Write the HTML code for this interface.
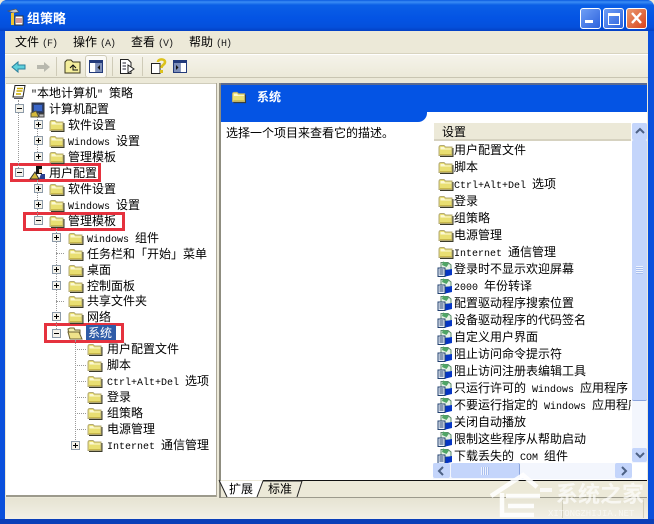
<!DOCTYPE html>
<html><head><meta charset="utf-8"><style>
html,body{margin:0;padding:0;background:#fff}
#w{position:relative;width:654px;height:524px;overflow:hidden;background:#ece9d8;font:12px/14px "WenQuanYi Zen Hei","Noto Sans CJK SC",sans-serif;color:#000}
#w div,#w span.a,#w svg{position:absolute}
.t{position:absolute;white-space:pre;height:14px;line-height:14px}
.m{font-family:"Liberation Mono",monospace;font-size:10px}
.k{font-family:"Liberation Mono",monospace;font-size:10px;letter-spacing:-1px;margin-left:3px;color:#222}
.r{position:absolute;border:3px solid #e5323e;box-sizing:border-box}
.b{position:absolute;width:9px;height:9px;box-sizing:border-box;border:1px solid #8c9aa8;background:#f4f2ea}
.b i{position:absolute;left:1px;top:3px;width:5px;height:1px;background:#000}
.b.p u{position:absolute;left:3px;top:1px;width:1px;height:5px;background:#000}
.d{position:absolute;border-left:1px dotted #999;width:0}
.h{position:absolute;border-top:1px dotted #999;height:0}
</style></head><body><div id="w">
<svg width="0" height="0"><defs>
<symbol id="f" viewBox="0 0 16 16"><path d="M1 5.5Q1 3.5 3 3.5H6L7.5 5H14V13.5H1Z" fill="#e9df72" stroke="#b3a974"/><path d="M2.5 5H6L7 6.5H13.5V7.5H2.5Z" fill="#fbf8d4"/><path d="M2 14.5H15.5M15 6V14.5" stroke="#3a3a2a" fill="none"/><path d="M2 12.5H14" stroke="#c8b84c"/></symbol>
<symbol id="g" viewBox="0 0 16 16"><path d="M4 1.5H11L14 4V9H4Z" fill="#e6f2e6" stroke="#5a8a6a"/><path d="M6 0.5L12 2.5L9.5 6L5 4Z" fill="#4fa565"/><path d="M1 7H8V15.5H1Z" fill="#e8eef6" stroke="#22406f"/><path d="M2.5 9H6.5M2.5 11H6.5M2.5 13H6.5" stroke="#22406f"/><path d="M8.5 9L15 8V14L8.5 15.5Z" fill="#0636c4"/></symbol>
</defs></svg>

<!-- frame / title -->
<div style="left:0;top:0;width:654px;height:524px;background:#0a50dc;border-radius:7px 7px 0 0"></div>
<div style="left:0;top:0;width:654px;height:31px;border-radius:7px 7px 0 0;background:linear-gradient(#0a5ae0 0,#3a8cf5 2px,#0a5fe6 5px,#0454e4 18px,#0450dc 27px,#0340c4 31px)"></div>
<div style="left:0;top:519px;width:654px;height:5px;background:#0a3fb8"></div>
<div style="left:5px;top:31px;width:643px;height:488px;background:#ece9d8"></div>
<svg style="left:7px;top:8px" width="18" height="18" viewBox="0 0 18 18"><path d="M1 3L9 1L12 4L6 5Z" fill="#c4c4c4" stroke="#555" stroke-width=".7"/><path d="M4 5H7V17H4Z" fill="#f0c530"/><path d="M8 8H16V17H8Z" fill="#fff" stroke="#333"/><path d="M10 10V15M12 10V15M14 10V15" stroke="#a33"/></svg>
<span class="t" style="left:27px;top:11px;color:#fff;font-weight:bold;font-size:13px">组策略</span>
<!-- caption btns -->
<div style="left:580px;top:8px;width:19px;height:19px;border:1px solid #fff;border-radius:3px;background:linear-gradient(135deg,#6f9ef5,#2c62dd)"></div>
<div style="left:585px;top:20px;width:8px;height:3px;background:#fff"></div>
<div style="left:603px;top:8px;width:19px;height:19px;border:1px solid #fff;border-radius:3px;background:linear-gradient(135deg,#6f9ef5,#2c62dd)"></div>
<div style="left:608px;top:13px;width:10px;height:8px;border:1px solid #fff;border-top-width:3px"></div>
<div style="left:626px;top:8px;width:19px;height:19px;border:1px solid #fff;border-radius:3px;background:linear-gradient(135deg,#ea9a70,#d8431c)"></div>
<svg style="left:629px;top:11px" width="15" height="15"><path d="M3 2L12 12M12 2L3 12" stroke="#fff" stroke-width="2.4"/></svg>

<!-- menu -->
<div style="left:5px;top:53px;width:643px;height:1px;background:#d8d4c0"></div>
<div style="left:5px;top:54px;width:643px;height:1px;background:#fff"></div>
<span class="t" style="left:15px;top:35px">文件<span class="k">(F)</span></span>
<span class="t" style="left:73px;top:35px">操作<span class="k">(A)</span></span>
<span class="t" style="left:131px;top:35px">查看<span class="k">(V)</span></span>
<span class="t" style="left:189px;top:35px">帮助<span class="k">(H)</span></span>
<!-- toolbar -->
<div style="left:5px;top:55px;width:643px;height:23px;background:linear-gradient(#f5f3ea,#ece9d8)"></div>
<div style="left:5px;top:77px;width:643px;height:1px;background:#c9c5b2"></div>
<svg style="left:11px;top:60px" width="40" height="14"><path d="M1 7L7 2V5H14V9H7V12Z" fill="#5fd0dc" stroke="#2a7f9c"/><path d="M39 7L33 2V5H26V9H33V12Z" fill="#b8b8ae"/></svg>
<div style="left:56px;top:57px;width:1px;height:19px;background:#cfcbb8"></div>
<svg style="left:64px;top:58px" width="18" height="17"><path d="M1 4L3 2H7L9 4H16V15H1Z" fill="#f4ee9c" stroke="#3d3a20"/><path d="M6 10L9 7L12 10M9 7V12H14" fill="none" stroke="#111"/></svg>
<div style="left:85px;top:55px;width:20px;height:21px;background:#fbfaf6;border:1px solid #cfcbb8;border-radius:3px"></div>
<svg style="left:89px;top:60px" width="15" height="13"><path d="M.5.5H13.5V12.5H.5Z" fill="#fff" stroke="#223a7a"/><path d="M.5.5H13.5V3H.5Z" fill="#223a7a"/><path d="M7 1V12" stroke="#223a7a"/><path d="M7 3H13V12H7Z" fill="#7e8fb8"/><path d="M11 5L8.5 7.5L11 10Z" fill="#111"/></svg>
<div style="left:112px;top:57px;width:1px;height:19px;background:#cfcbb8"></div>
<svg style="left:119px;top:58px" width="16" height="17"><path d="M1.5 1.5H9L12 4.5V15.5H1.5Z" fill="#fff" stroke="#222"/><path d="M3.5 5H7M3.5 8H7M3.5 11H7" stroke="#223"/><path d="M9 7L15 11L9 15Z" fill="#fff" stroke="#222"/></svg>
<div style="left:142px;top:57px;width:1px;height:19px;background:#cfcbb8"></div>
<svg style="left:150px;top:58px" width="17" height="17"><path d="M1.5 5.5H10V15.5H1.5Z" fill="#fff" stroke="#222"/><path d="M8 4C8 .5 15 .5 15 4C15 7 11.5 6.5 11.5 10" fill="none" stroke="#dcc21c" stroke-width="2.6"/><path d="M10 12H13V15H10Z" fill="#dcc21c"/></svg>
<svg style="left:173px;top:60px" width="15" height="13"><path d="M.5.5H13.5V12.5H.5Z" fill="#fff" stroke="#223a7a"/><path d="M.5.5H13.5V3H.5Z" fill="#223a7a"/><path d="M7 1V12" stroke="#223a7a"/><path d="M1 3H7V12H1Z" fill="#7e8fb8"/><path d="M3 5L5.5 7.5L3 10Z" fill="#111"/></svg>

<!-- tree pane -->
<div style="left:6px;top:83px;width:210px;height:414px;background:#fff;border-top:1px solid #d0cdbb;border-bottom:2px solid #9c9a8c;box-sizing:border-box"></div>
<div style="left:216px;top:83px;width:1px;height:414px;background:#aca899"></div>
<!-- right pane -->
<div style="left:219px;top:83px;width:428px;height:415px;background:#fff;border-left:2px solid #8f8d80;box-sizing:border-box"></div>
<div style="left:221px;top:83px;width:426px;height:2px;background:#5a6a90"></div>
<div style="left:221px;top:85px;width:426px;height:27px;background:#0454e4"></div>
<div style="left:221px;top:112px;width:194px;height:10px;background:#0454e4"></div>
<div style="left:415px;top:112px;width:12px;height:10px;background:#0454e4;border-radius:0 0 9px 0"></div>
<svg style="left:231px;top:89px" width="16" height="15"><use href="#f"/></svg>
<span class="t" style="left:257px;top:90px;color:#fff;font-weight:bold">系统</span>
<span class="t" style="left:226px;top:126px">选择一个项目来查看它的描述。</span>

<!-- list header -->
<div style="left:434px;top:123px;width:197px;height:18px;background:#ece9d8;border-bottom:2px solid #d6d2c0;box-sizing:border-box"></div>
<span class="t" style="left:442px;top:125px">设置</span>

<!-- list -->
<svg style="left:438px;top:142px" width="16" height="16"><use href="#f"/></svg><span class="t" style="left:454px;top:143px">用户配置文件</span>
<svg style="left:438px;top:159px" width="16" height="16"><use href="#f"/></svg><span class="t" style="left:454px;top:160px">脚本</span>
<svg style="left:438px;top:176px" width="16" height="16"><use href="#f"/></svg><span class="t" style="left:454px;top:177px"><span class="m">Ctrl+Alt+Del </span>选项</span>
<svg style="left:438px;top:193px" width="16" height="16"><use href="#f"/></svg><span class="t" style="left:454px;top:194px">登录</span>
<svg style="left:438px;top:210px" width="16" height="16"><use href="#f"/></svg><span class="t" style="left:454px;top:211px">组策略</span>
<svg style="left:438px;top:227px" width="16" height="16"><use href="#f"/></svg><span class="t" style="left:454px;top:228px">电源管理</span>
<svg style="left:438px;top:244px" width="16" height="16"><use href="#f"/></svg><span class="t" style="left:454px;top:245px"><span class="m">Internet </span>通信管理</span>
<svg style="left:437px;top:261px" width="16" height="16"><use href="#g"/></svg><span class="t" style="left:454px;top:262px">登录时不显示欢迎屏幕</span>
<svg style="left:437px;top:278px" width="16" height="16"><use href="#g"/></svg><span class="t" style="left:454px;top:279px"><span class="m">2000 </span>年份转译</span>
<svg style="left:437px;top:295px" width="16" height="16"><use href="#g"/></svg><span class="t" style="left:454px;top:296px">配置驱动程序搜索位置</span>
<svg style="left:437px;top:312px" width="16" height="16"><use href="#g"/></svg><span class="t" style="left:454px;top:313px">设备驱动程序的代码签名</span>
<svg style="left:437px;top:329px" width="16" height="16"><use href="#g"/></svg><span class="t" style="left:454px;top:330px">自定义用户界面</span>
<svg style="left:437px;top:346px" width="16" height="16"><use href="#g"/></svg><span class="t" style="left:454px;top:347px">阻止访问命令提示符</span>
<svg style="left:437px;top:363px" width="16" height="16"><use href="#g"/></svg><span class="t" style="left:454px;top:364px">阻止访问注册表编辑工具</span>
<svg style="left:437px;top:380px" width="16" height="16"><use href="#g"/></svg><span class="t" style="left:454px;top:381px">只运行许可的<span class="m"> Windows </span>应用程序</span>
<svg style="left:437px;top:397px" width="16" height="16"><use href="#g"/></svg><div style="left:454px;top:398px;width:177px;height:14px;overflow:hidden;white-space:pre">不要运行指定的<span class="m"> Windows </span>应用程序</div>
<svg style="left:437px;top:414px" width="16" height="16"><use href="#g"/></svg><span class="t" style="left:454px;top:415px">关闭自动播放</span>
<svg style="left:437px;top:431px" width="16" height="16"><use href="#g"/></svg><span class="t" style="left:454px;top:432px">限制这些程序从帮助启动</span>
<svg style="left:437px;top:448px" width="16" height="16"><use href="#g"/></svg><span class="t" style="left:454px;top:449px">下载丢失的<span class="m"> COM </span>组件</span>

<!-- v scroll -->
<div style="left:632px;top:123px;width:15px;height:340px;background:#f3f6fd"></div>
<div style="left:632px;top:123px;width:15px;height:17px;background:#c4d5fb;border-radius:2px"></div>
<svg style="left:635px;top:127px" width="10" height="8"><path d="M1 6L5 2L9 6" fill="none" stroke="#4d6185" stroke-width="2"/></svg>
<div style="left:632px;top:140px;width:15px;height:261px;background:#c4d5fb;border-radius:2px;border-bottom:1px solid #8aa3dc;box-sizing:border-box"></div>
<div style="left:636px;top:266px;width:7px;height:8px;background:repeating-linear-gradient(#eef3fe 0 1px,#a9bfee 1px 2px)"></div>
<div style="left:632px;top:448px;width:15px;height:14px;background:#c4d5fb;border-radius:2px"></div>
<svg style="left:635px;top:451px" width="10" height="8"><path d="M1 2L5 6L9 2" fill="none" stroke="#4d6185" stroke-width="2"/></svg>
<!-- h scroll -->
<div style="left:433px;top:463px;width:199px;height:16px;background:#f3f6fd"></div>
<div style="left:433px;top:463px;width:17px;height:15px;background:#c4d5fb;border-radius:2px"></div>
<svg style="left:437px;top:466px" width="8" height="10"><path d="M6 1L2 5L6 9" fill="none" stroke="#4d6185" stroke-width="2"/></svg>
<div style="left:451px;top:463px;width:69px;height:15px;background:#c4d5fb;border-radius:2px;border-right:1px solid #8aa3dc;box-sizing:border-box"></div>
<div style="left:481px;top:467px;width:8px;height:8px;background:repeating-linear-gradient(90deg,#eef3fe 0 1px,#a9bfee 1px 2px)"></div>
<div style="left:615px;top:463px;width:17px;height:15px;background:#c4d5fb;border-radius:2px"></div>
<svg style="left:620px;top:466px" width="8" height="10"><path d="M2 1L6 5L2 9" fill="none" stroke="#4d6185" stroke-width="2"/></svg>

<!-- tabs -->
<div style="left:221px;top:480px;width:426px;height:17px;background:#ece9d8"></div>
<div style="left:263px;top:480px;width:384px;height:1px;background:#111"></div>
<div style="left:221px;top:497px;width:426px;height:1px;background:#9c9a8c"></div>
<svg style="left:218px;top:479px" width="90" height="19"><path d="M1 1L9 18H39L45 2H1Z" fill="#fff"/><path d="M1 1L9 18" fill="none" stroke="#222"/><path d="M39 18L45 2H79L84 2L79 18" fill="none" stroke="#222"/></svg>
<span class="t" style="left:229px;top:482px">扩展</span>
<span class="t" style="left:268px;top:482px">标准</span>

<!-- red boxes -->
<div class="r" style="left:10px;top:163px;width:91px;height:19px"></div>
<div class="r" style="left:23px;top:212px;width:102px;height:19px"></div>
<div class="r" style="left:44px;top:323px;width:80px;height:20px"></div>

<!-- tree lines -->
<div class="d" style="left:18px;top:100px;height:74px"></div>
<div class="d" style="left:37px;top:116px;height:42px"></div>
<div class="d" style="left:37px;top:180px;height:42px"></div>
<div class="d" style="left:56px;top:228px;height:105px"></div>
<div class="d" style="left:75px;top:340px;height:106px"></div>
<div class="h" style="left:56px;top:253px;width:8px"></div>
<div class="h" style="left:56px;top:301px;width:8px"></div>
<div class="h" style="left:75px;top:349px;width:11px"></div>
<div class="h" style="left:75px;top:365px;width:11px"></div>
<div class="h" style="left:75px;top:381px;width:11px"></div>
<div class="h" style="left:75px;top:397px;width:11px"></div>
<div class="h" style="left:75px;top:413px;width:11px"></div>
<div class="h" style="left:75px;top:429px;width:11px"></div>

<!-- tree -->
<svg style="left:12px;top:84px" width="16" height="16" viewBox="0 0 16 16"><path d="M3 1.5H13L11 13H1Z" fill="#fff" stroke="#222"/><path d="M5 4.5H11M4.5 7H10.5M4 10H9" stroke="#c9a800" stroke-width="1.4"/><path d="M2 14.5H11" stroke="#556"/></svg>
<span class="t" style="left:31px;top:86px"><span class="m">"</span>本地计算机<span class="m">" </span>策略</span>

<div class="b" style="left:15px;top:104px"><i></i></div>
<svg style="left:30px;top:102px" width="16" height="16" viewBox="0 0 16 16"><path d="M2 1H14V11H2Z" fill="#2a3f70" stroke="#333"/><path d="M4 3H12V9H4Z" fill="#3a66c8"/><path d="M1 11L6 9L9 15H1Z" fill="#d4b93c" stroke="#554"/><path d="M9 12H14V15H9Z" fill="#c0c0c0" stroke="#444"/></svg>
<span class="t" style="left:49px;top:102px">计算机配置</span>

<div class="b p" style="left:34px;top:120px"><i></i><u></u></div>
<svg style="left:49px;top:117px" width="16" height="16"><use href="#f"/></svg>
<span class="t" style="left:68px;top:118px">软件设置</span>
<div class="b p" style="left:34px;top:136px"><i></i><u></u></div>
<svg style="left:49px;top:133px" width="16" height="16"><use href="#f"/></svg>
<span class="t" style="left:68px;top:134px"><span class="m">Windows </span>设置</span>
<div class="b p" style="left:34px;top:152px"><i></i><u></u></div>
<svg style="left:49px;top:149px" width="16" height="16"><use href="#f"/></svg>
<span class="t" style="left:68px;top:150px">管理模板</span>

<div class="b" style="left:15px;top:168px"><i></i></div>
<svg style="left:29px;top:165px" width="17" height="15" viewBox="0 0 17 15"><path d="M1 14L6 7L10 14Z" fill="#d4b93c" stroke="#333"/><path d="M7 1H13V9H7Z" fill="#111"/><path d="M10 4H13V8H10Z" fill="#f2d0a8"/><path d="M12 9H16V14H10Z" fill="#2a3f90"/></svg>
<span class="t" style="left:49px;top:166px">用户配置</span>

<div class="b p" style="left:34px;top:184px"><i></i><u></u></div>
<svg style="left:49px;top:181px" width="16" height="16"><use href="#f"/></svg>
<span class="t" style="left:68px;top:182px">软件设置</span>
<div class="b p" style="left:34px;top:200px"><i></i><u></u></div>
<svg style="left:49px;top:197px" width="16" height="16"><use href="#f"/></svg>
<span class="t" style="left:68px;top:198px"><span class="m">Windows </span>设置</span>
<div class="b" style="left:34px;top:216px"><i></i></div>
<svg style="left:49px;top:213px" width="16" height="16"><use href="#f"/></svg>
<span class="t" style="left:68px;top:214px">管理模板</span>

<div class="b p" style="left:52px;top:233px"><i></i><u></u></div>
<svg style="left:68px;top:230px" width="16" height="16"><use href="#f"/></svg>
<span class="t" style="left:87px;top:231px"><span class="m">Windows </span>组件</span>
<svg style="left:68px;top:246px" width="16" height="16"><use href="#f"/></svg>
<span class="t" style="left:87px;top:247px">任务栏和「开始」菜单</span>
<div class="b p" style="left:52px;top:265px"><i></i><u></u></div>
<svg style="left:68px;top:262px" width="16" height="16"><use href="#f"/></svg>
<span class="t" style="left:87px;top:263px">桌面</span>
<div class="b p" style="left:52px;top:281px"><i></i><u></u></div>
<svg style="left:68px;top:278px" width="16" height="16"><use href="#f"/></svg>
<span class="t" style="left:87px;top:279px">控制面板</span>
<svg style="left:68px;top:293px" width="16" height="16"><use href="#f"/></svg>
<span class="t" style="left:87px;top:294px">共享文件夹</span>
<div class="b p" style="left:52px;top:312px"><i></i><u></u></div>
<svg style="left:68px;top:309px" width="16" height="16"><use href="#f"/></svg>
<span class="t" style="left:87px;top:310px">网络</span>
<div class="b" style="left:52px;top:329px"><i></i></div>
<svg style="left:67px;top:325px" width="17" height="16" viewBox="0 0 17 16"><path d="M1 4L3 3H7L8 5H13V14H3Z" fill="#f6f0b0" stroke="#6c6236"/><path d="M3 14L1 7H12L15 14Z" fill="#efe28a" stroke="#6c6236"/></svg>
<div style="left:86px;top:325px;width:30px;height:15px;background:#2f5ca8"></div>
<span class="t" style="left:88px;top:326px;color:#fff">系统</span>

<svg style="left:87px;top:341px" width="16" height="16"><use href="#f"/></svg>
<span class="t" style="left:107px;top:342px">用户配置文件</span>
<svg style="left:87px;top:357px" width="16" height="16"><use href="#f"/></svg>
<span class="t" style="left:107px;top:358px">脚本</span>
<svg style="left:87px;top:373px" width="16" height="16"><use href="#f"/></svg>
<span class="t" style="left:107px;top:374px"><span class="m">Ctrl+Alt+Del </span>选项</span>
<svg style="left:87px;top:389px" width="16" height="16"><use href="#f"/></svg>
<span class="t" style="left:107px;top:390px">登录</span>
<svg style="left:87px;top:405px" width="16" height="16"><use href="#f"/></svg>
<span class="t" style="left:107px;top:406px">组策略</span>
<svg style="left:87px;top:421px" width="16" height="16"><use href="#f"/></svg>
<span class="t" style="left:107px;top:422px">电源管理</span>
<div class="b p" style="left:71px;top:441px"><i></i><u></u></div>
<svg style="left:87px;top:437px" width="16" height="16"><use href="#f"/></svg>
<span class="t" style="left:107px;top:438px"><span class="m">Internet </span>通信管理</span>

<!-- status -->
<div style="left:5px;top:498px;width:643px;height:21px;background:linear-gradient(#e6e3d2,#f2f0e6)"></div>
<div style="left:562px;top:499px;width:1px;height:19px;background:#cfccba"></div>
<div style="left:643px;top:499px;width:1px;height:19px;background:#cfccba"></div>

<!-- watermark -->
<svg style="left:490px;top:470px" width="72" height="50" viewBox="0 0 72 50"><path d="M1 26L33 5L47 17M12 23V45H44M16 26H50M18 36H44" fill="none" stroke="#fff" stroke-width="4.5" opacity=".9"/><path d="M50 20H62" stroke="#fff" stroke-width="4" opacity=".8"/></svg>
<span class="t" style="left:556px;top:481px;color:#fff;font-size:22px;line-height:24px;height:24px;font-weight:bold;opacity:.7">系统之家</span>
<span class="t m" style="left:548px;top:507px;color:#fff;font-size:9px;opacity:.6">XITONGZHIJIA.NET</span>
</div></body></html>
